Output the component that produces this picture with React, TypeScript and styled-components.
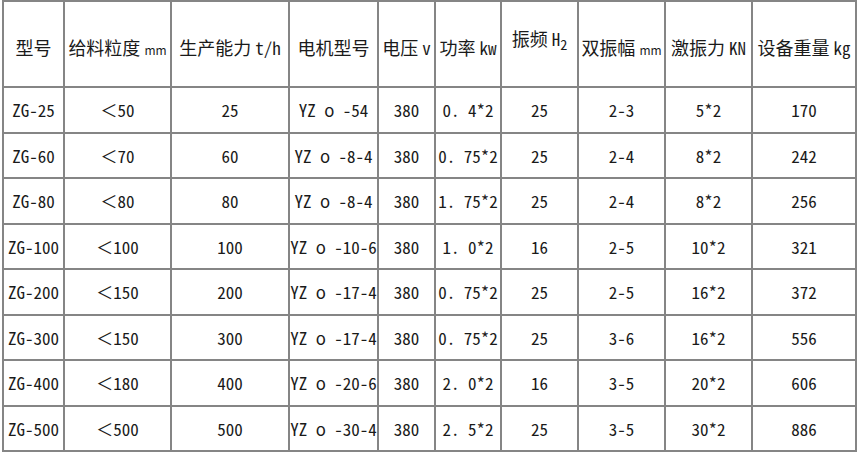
import React from 'react';
import styled, { createGlobalStyle } from 'styled-components';

const GlobalStyle = createGlobalStyle`
    html, body {
        margin: 0;
        padding: 0;
        background: #ffffff;
    }
    body {
        font-family: "Noto Sans Mono CJK SC", "Noto Sans CJK SC", "DejaVu Sans Mono", monospace;
        color: #1a1a1a;
    }
`;

const Wrapper = styled.div`
    padding-left: 2px;
    width: 860px;
    height: 455px;
    overflow: hidden;
    box-sizing: border-box;
`;

const Table = styled.table`
    border-collapse: collapse;
    table-layout: fixed;
    width: 855px;
`;

const HeadCell = styled.th<{ $raise?: boolean }>`
    border: 2px solid #858585;
    height: 76px;
    padding: ${p => (p.$raise ? '0 0 8px 0' : '6px 0 0 0')};
    font-size: 18px;
    font-weight: 400;
    text-align: center;
    white-space: nowrap;
    overflow: hidden;
`;

const Cell = styled.td`
    border: 2px solid #858585;
    height: 43.5px;
    padding: 0;
    font-size: 17px;
    text-align: center;
    white-space: pre;
    overflow: hidden;
`;

const SmallUnit = styled.span`
    margin-left: 4px;
    font-family: "Noto Sans CJK SC", sans-serif;
    font-size: 12px;
`;

const Unit = styled.span`
    margin-left: 4px;
    font-size: 17px;
`;

const columns = [61, 107, 118, 89, 57, 66, 77, 87, 87, 104];

const rows = [
    ['ZG-25', '＜50', '25', 'YZ ο -54', '380', '0. 4*2', '25', '2-3', '5*2', '170'],
    ['ZG-60', '＜70', '60', 'YZ ο -8-4', '380', '0. 75*2', '25', '2-4', '8*2', '242'],
    ['ZG-80', '＜80', '80', 'YZ ο -8-4', '380', '1. 75*2', '25', '2-4', '8*2', '256'],
    ['ZG-100', '＜100', '100', 'YZ ο -10-6', '380', '1. 0*2', '16', '2-5', '10*2', '321'],
    ['ZG-200', '＜150', '200', 'YZ ο -17-4', '380', '0. 75*2', '25', '2-5', '16*2', '372'],
    ['ZG-300', '＜150', '300', 'YZ ο -17-4', '380', '0. 75*2', '25', '3-6', '16*2', '556'],
    ['ZG-400', '＜180', '400', 'YZ ο -20-6', '380', '2. 0*2', '16', '3-5', '20*2', '606'],
    ['ZG-500', '＜500', '500', 'YZ ο -30-4', '380', '2. 5*2', '25', '3-5', '30*2', '886'],
];

export default function App() {
    return (
        <>
            <GlobalStyle />
            <Wrapper>
                <Table>
                    <colgroup>
                        {columns.map((w, i) => (
                            <col key={i} style={{ width: w }} />
                        ))}
                    </colgroup>
                    <thead>
                        <tr>
                            <HeadCell>型号</HeadCell>
                            <HeadCell>给料粒度<SmallUnit>mm</SmallUnit></HeadCell>
                            <HeadCell>生产能力<Unit>t/h</Unit></HeadCell>
                            <HeadCell>电机型号</HeadCell>
                            <HeadCell>电压<Unit>v</Unit></HeadCell>
                            <HeadCell>功率<Unit>kw</Unit></HeadCell>
                            <HeadCell $raise>振频<Unit>H<sub>2</sub></Unit></HeadCell>
                            <HeadCell>双振幅<SmallUnit>mm</SmallUnit></HeadCell>
                            <HeadCell>激振力<Unit>KN</Unit></HeadCell>
                            <HeadCell>设备重量<Unit>kg</Unit></HeadCell>
                        </tr>
                    </thead>
                    <tbody>
                        {rows.map((row, r) => (
                            <tr key={r}>
                                {row.map((value, c) => (
                                    <Cell key={c}>{value}</Cell>
                                ))}
                            </tr>
                        ))}
                    </tbody>
                </Table>
            </Wrapper>
        </>
    );
}
